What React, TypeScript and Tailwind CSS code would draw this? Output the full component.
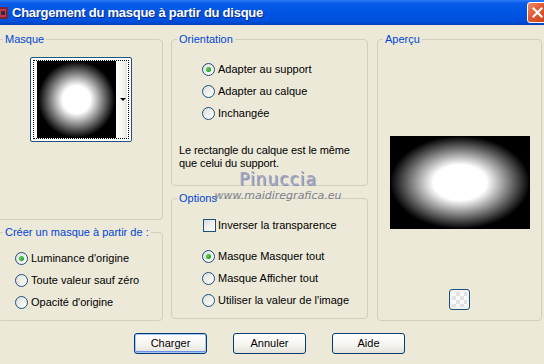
import { ReactNode } from 'react';

function GroupBox({ label, className, children }: { label: string; className: string; children?: ReactNode }) {
  return (
    <fieldset className={`border border-[#D0D0BF] rounded-[4px] ${className}`}>
      <legend className="ml-[5px] px-[2px] leading-[13px] text-[#0046D5]">{label}</legend>
      {children}
    </fieldset>
  );
}

function Radio({ label, checked = false }: { label: string; checked?: boolean }) {
  return (
    <div className="flex items-center h-[22px] gap-[3px]">
      <div className="w-[13px] h-[13px] rounded-full border border-[#1C5180] bg-[linear-gradient(135deg,#DCDCD7_0%,#F2F2EE_55%,#FFFFFF_100%)] flex items-center justify-center">
        {checked && <div className="w-[5px] h-[5px] rounded-full bg-[radial-gradient(circle_at_35%_35%,#5FD35F,#21A121_70%)]" />}
      </div>
      <span className="leading-[13px]">{label}</span>
    </div>
  );
}

function Checkbox({ label }: { label: string }) {
  return (
    <div className="flex items-center h-[22px] gap-[2px]">
      <div className="w-[13px] h-[13px] border border-[#1C5180] bg-[linear-gradient(135deg,#DCDCD7_0%,#F2F2EE_55%,#FFFFFF_100%)]" />
      <span className="leading-[13px]">{label}</span>
    </div>
  );
}

function Button({ label, isDefault = false }: { label: string; isDefault?: boolean }) {
  return (
    <button
      className={`w-[73px] h-[21px] rounded-[3px] border border-[#003C74] bg-[linear-gradient(180deg,#FFFFFF_0%,#F4F3EE_60%,#E3E1D8_100%)] text-black leading-[13px] ${
        isDefault ? 'shadow-[inset_0_0_0_1px_#A8C6F2,inset_0_-1px_0_1px_#6A8FE8]' : ''
      }`}
    >
      {label}
    </button>
  );
}

export default function App() {
  return (
    <div className="relative w-[544px] h-[364px] overflow-hidden bg-[#ECE9D8] font-['Liberation_Sans',Arial,sans-serif] text-[11px] text-black">
      {/* Title bar */}
      <div className="h-[25px] flex items-center bg-[linear-gradient(180deg,#2F7BF5_0%,#0A5DEA_12%,#0054E3_50%,#0050DC_85%,#003FC0_100%)]">
        <svg width="9" height="14" viewBox="0 0 9 14">
          <rect x="-4" y="1" width="12" height="12" rx="1" fill="#7A2438" />
          <rect x="-3" y="3" width="9" height="8" fill="#C43A4C" />
          <rect x="1" y="5" width="4" height="4" fill="#2C2C40" />
        </svg>
        <span className="ml-[3px] text-white font-bold text-[13px] tracking-[-0.25px] [text-shadow:1px_1px_0_#0A2A8A]">
          Chargement du masque à partir du disque
        </span>
        <div className="ml-auto mr-[-4px] w-[21px] h-[21px] rounded-[3px] border border-white bg-[linear-gradient(135deg,#F08A6A_0%,#E2582F_45%,#C8401C_100%)] flex items-center justify-center">
          <svg width="11" height="11" viewBox="0 0 11 11">
            <path d="M1.5 1.5 L9.5 9.5 M9.5 1.5 L1.5 9.5" stroke="#FFFFFF" strokeWidth="2.2" strokeLinecap="square" />
          </svg>
        </div>
      </div>

      {/* Panels */}
      <div className="flex pt-[8px] ml-[-3px]">
        <div className="w-[166px] flex flex-col gap-[6px]">
          <GroupBox label="Masque" className="h-[187px]">
            <div className="ml-[32px] mt-[11px] w-[102px] h-[85px] rounded-[2px] border border-[#1C5180] bg-white p-[2px]">
              <div className="h-full border border-dotted border-black flex pl-[3px] pr-[1px]">
                <div className="w-[79px] h-full bg-black bg-[radial-gradient(circle_closest-side,#FFFFFF_0%,#FFFFFF_36%,#000000_100%)]" />
                <div className="flex-1 h-full flex items-center justify-end bg-[linear-gradient(90deg,#FFFFFF_0%,#F6F5F0_60%,#E6E4DA_100%)]">
                  <div className="w-0 h-0 border-x-[3px] border-x-transparent border-t-[3px] border-t-black mr-[1px]" />
                </div>
              </div>
            </div>
          </GroupBox>
          <GroupBox label="Créer un masque à partir de :" className="h-[95px]">
            <div className="pl-[17px] pt-[8px]">
              <Radio label="Luminance d'origine" checked />
              <Radio label="Toute valeur sauf zéro" />
              <Radio label="Opacité d'origine" />
            </div>
          </GroupBox>
        </div>

        <div className="ml-[8px] w-[197px] flex flex-col gap-[6px]">
          <GroupBox label="Orientation" className="h-[153px]">
            <div className="pl-[30px] pt-[12px]">
              <Radio label="Adapter au support" checked />
              <Radio label="Adapter au calque" />
              <Radio label="Inchangée" />
            </div>
            <p className="pl-[7px] mt-[20px] leading-[13px] tracking-[-0.1px]">
              Le rectangle du calque est le même
              <br />
              que celui du support.
            </p>
          </GroupBox>
          <GroupBox label="Options" className="h-[127px]">
            <div className="pl-[31px] pt-[9px]">
              <Checkbox label="Inverser la transparence" />
            </div>
            <div className="pl-[30px] mt-[9px]">
              <Radio label="Masque Masquer tout" checked />
              <Radio label="Masque Afficher tout" />
              <Radio label="Utiliser la valeur de l'image" />
            </div>
          </GroupBox>
        </div>

        <div className="ml-[9px] w-[165px]">
          <GroupBox label="Aperçu" className="h-[288px]">
            <div className="mx-auto mt-[90px] w-[140px] h-[93px] bg-black bg-[radial-gradient(ellipse_closest-side,#FFFFFF_0%,#FFFFFF_38%,#000000_100%)]" />
            <div className="mx-auto mt-[60px] w-[21px] h-[21px] rounded-[3px] border border-[#1C5180] bg-[#F4F3EE] p-[2px]">
              <div className="w-full h-full bg-[conic-gradient(#E2E2E2_25%,#FAFAFA_0_50%,#E2E2E2_0_75%,#FAFAFA_0)] bg-[length:8px_8px]" />
            </div>
          </GroupBox>
        </div>
      </div>

      {/* Buttons */}
      <div className="flex pl-[134px] gap-[26px] mt-[12px]">
        <Button label="Charger" isDefault />
        <Button label="Annuler" />
        <Button label="Aide" />
      </div>

      {/* Watermark */}
      <div className="absolute left-[218px] top-[170px] w-[120px] flex flex-col items-center pointer-events-none">
        <span className="font-['DejaVu_Sans',sans-serif] text-[17px] leading-[18px] tracking-[1px] text-[#A3A7C2] [text-shadow:1px_1px_0_#8A8DA8]">
          Pinuccia
        </span>
        <span className="font-['DejaVu_Sans',sans-serif] italic text-[11px] leading-[12px] mt-[2px] text-[#80808F]">
          www.maidiregrafica.eu
        </span>
      </div>
    </div>
  );
}
